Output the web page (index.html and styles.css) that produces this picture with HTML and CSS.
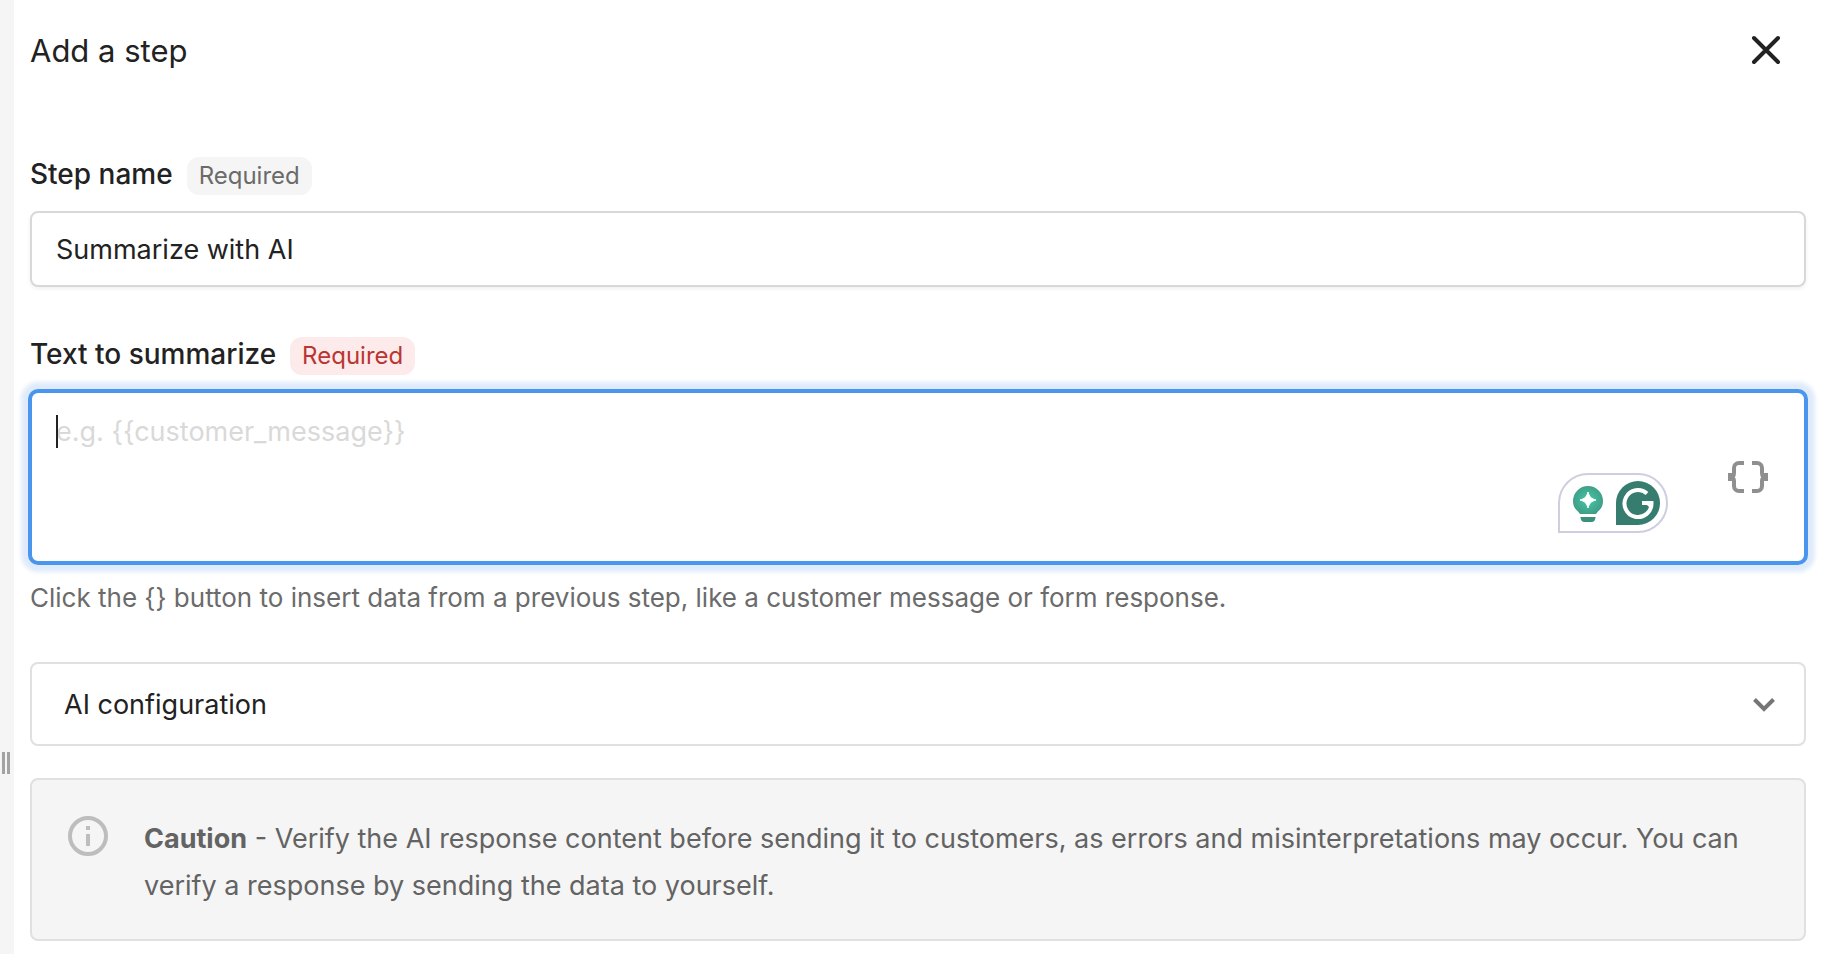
FILE: index.html
```html
<!DOCTYPE html>
<html lang="en">
<head>
    <meta charset="UTF-8">
    <meta name="viewport" content="width=device-width, initial-scale=1.0">
    <title>Add a step</title>
    <link rel="stylesheet" href="styles.css">
</head>
<body>
    <div class="layout">
        <div class="gutter">
            <div class="drag-handle"></div>
        </div>

        <main class="panel">
            <header class="panel-header">
                <h1>Add a step</h1>
                <button type="button" class="close-button" aria-label="Close">
                    <svg width="32" height="32" viewBox="0 0 32 32" fill="none" stroke="#222" stroke-width="4" stroke-linecap="round">
                        <path d="M4 3l24 24M28 3L4 27"/>
                    </svg>
                </button>
            </header>

            <form>
                <div class="field">
                    <div class="field-head">
                        <label for="step-name">Step name</label>
                        <span class="badge">Required</span>
                    </div>
                    <input type="text" id="step-name" class="text-input" value="Summarize with AI">
                </div>

                <div class="field field-with-help">
                    <div class="field-head">
                        <label for="summary-text">Text to summarize</label>
                        <span class="badge badge-error">Required</span>
                    </div>
                    <div class="textarea-wrap">
                        <textarea id="summary-text" placeholder="e.g. {{customer_message}}" aria-describedby="summary-help"></textarea>
                        <span class="caret"></span>
                        <div class="assistant">
                            <svg width="32" height="40" viewBox="0 -2 32 40">
                                <defs>
                                    <radialGradient id="bulb">
                                        <stop offset="0.4" stop-color="#40b99d"/>
                                        <stop offset="1" stop-color="#429e87"/>
                                    </radialGradient>
                                </defs>
                                <path d="M16 1a15 15 0 0 1 15 15c0 5-2 8-5 10.500-1 1-1.500 2-2 2.500H8c-.5-.5-1-1.500-2-2.500C3 24 1 21 1 16A15 15 0 0 1 16 1z" fill="url(#bulb)"/>
                                <path d="M8.500 32h15c0 3-1.500 5-4 5h-7c-2.500 0-4-2-4-5z" fill="#3c8f7b"/>
                                <path d="M16 7c1.500 5 3 6.500 8 8-5 1.500-6.500 3-8 8-1.500-5-3-6.500-8-8 5-1.500 6.500-3 8-8z" fill="#fff" stroke="#fff" stroke-linejoin="round"/>
                            </svg>
                            <svg width="44" height="44" viewBox="0 0 44 44">
                                <path d="M22 0a22 22 0 0 1 0 44H0V22A22 22 0 0 1 22 0z" fill="#367d70"/>
                                <path d="M31 12.500A13.500 13.500 0 1 0 35.500 22H26" fill="none" stroke="#fff" stroke-width="4"/>
                                <path d="M28 21h9l-3 6z" fill="#fff"/>
                            </svg>
                        </div>
                        <button type="button" class="insert-button" aria-label="Insert data">
                            <svg width="40" height="32" viewBox="0 0 40 32" fill="none" stroke="#8f8f8f" stroke-width="4">
                                <path d="M16 2h-5a5 5 0 0 0-5 5v5q0 4-4 4 4 0 4 4v5a5 5 0 0 0 5 5h5M24 2h5a5 5 0 0 1 5 5v5q0 4 4 4-4 0-4 4v5a5 5 0 0 1-5 5h-5"/>
                                <path d="M0 16h4M36 16h4" stroke-width="8"/>
                            </svg>
                        </button>
                    </div>
                    <p class="help" id="summary-help">Click the {} button to insert data from a previous step, like a customer message or form response.</p>
                </div>

                <button type="button" class="accordion" aria-expanded="false">
                    <span>AI configuration</span>
                    <svg width="24" height="16" viewBox="0 0 24 16" fill="none" stroke="#757575" stroke-width="4">
                        <path d="M2.500 2.500L12 12l9.500-9.500"/>
                    </svg>
                </button>

                <div class="notice">
                    <svg width="40" height="40" viewBox="0 0 40 40">
                        <circle cx="20" cy="20" r="18" fill="none" stroke="#bdbdbd" stroke-width="4"/>
                        <path d="M18 10h4v4h-4zM18 18h4v12h-4z" fill="#bdbdbd"/>
                    </svg>
                    <p><strong>Caution</strong> - Verify the AI response content before sending it to customers, as errors and misinterpretations may occur. You can verify a response by sending the data to yourself.</p>
                </div>
            </form>
        </main>
    </div>
</body>
</html>
```
FILE: styles.css
```css
* {
    margin: 0;
    padding: 0;
    box-sizing: border-box;
}

body {
    font-family: Inter, 'Liberation Sans', sans-serif;
    font-size: 27px;
    line-height: 40px;
    color: #222;
    background-color: #fff;
}

button,
input,
textarea {
    font: inherit;
    color: inherit;
}

button {
    background: none;
    border: none;
    cursor: pointer;
}

svg {
    display: block;
    flex-shrink: 0;
}

.layout {
    display: flex;
    min-height: 100vh;
}

.gutter {
    position: relative;
    flex: 0 0 14px;
    background-color: #f5f5f5;
}

.drag-handle {
    position: absolute;
    top: 80%;
    left: 2px;
    width: 8px;
    height: 22px;
    border: solid #a3a3a3;
    border-width: 0 3px;
    transform: translateY(-50%);
}

.panel {
    flex: 1;
    min-width: 0;
    padding: 31px 24px 12px 16px;
}

.panel-header {
    display: flex;
    align-items: center;
    justify-content: space-between;
    padding-right: 24px;
    margin-bottom: 86px;
}

h1 {
    font-size: 31px;
    font-weight: 400;
}

.field {
    margin-bottom: 50px;
}

.field-with-help {
    margin-bottom: 46px;
}

.field-head {
    display: flex;
    align-items: baseline;
    gap: 14px;
    margin-bottom: 16px;
}

label {
    font-size: 28px;
    font-weight: 500;
    line-height: 32px;
}

.badge {
    padding: 0 12px;
    font-size: 24px;
    line-height: 38px;
    color: #6b6b6b;
    background-color: #f5f5f5;
    border-radius: 12px;
}

.badge-error {
    color: #b93632;
    background-color: #fdebec;
}

.text-input {
    display: block;
    width: 100%;
    height: 76px;
    padding: 0 24px;
    border: 2px solid #d8d8d8;
    border-radius: 8px;
    box-shadow: 0 2px 4px rgba(0, 0, 0, 0.06);
}

.textarea-wrap {
    position: relative;
}

textarea {
    display: block;
    width: 100%;
    height: 172px;
    padding: 19px 24px;
    border: 2px solid #4a95ee;
    border-radius: 8px;
    outline: none;
    resize: none;
    box-shadow: 0 0 0 2px #4a95ee, 0 0 4px 9px #dfebfb;
}

textarea::placeholder {
    color: #d9d9d9;
}

.caret {
    position: absolute;
    top: 24px;
    left: 26px;
    width: 2px;
    height: 33px;
    background-color: #222;
}

.assistant {
    position: absolute;
    right: 138px;
    bottom: 30px;
    display: flex;
    align-items: center;
    gap: 12px;
    height: 60px;
    padding: 0 6px 0 12px;
    background-color: #fff;
    border: 2px solid #cdcfdf;
    border-radius: 30px 30px 30px 0;
}

.insert-button {
    position: absolute;
    right: 38px;
    top: 70px;
}

.help {
    margin-top: 17px;
    font-size: 26px;
    line-height: 36px;
    color: #6b6b6b;
}

.accordion {
    display: flex;
    align-items: center;
    justify-content: space-between;
    width: 100%;
    height: 84px;
    padding: 2px 28px 0 32px;
    margin-bottom: 32px;
    border: 2px solid #e0e0e0;
    border-radius: 8px;
}

.notice {
    display: flex;
    gap: 36px;
    padding: 35px 36px 30px;
    color: #636363;
    background-color: #f5f5f5;
    border: 2px solid #e0e0e0;
    border-radius: 8px;
}

.notice svg {
    margin-top: 1px;
}

.notice p {
    line-height: 47px;
}

.notice strong {
    font-weight: 700;
}
```
